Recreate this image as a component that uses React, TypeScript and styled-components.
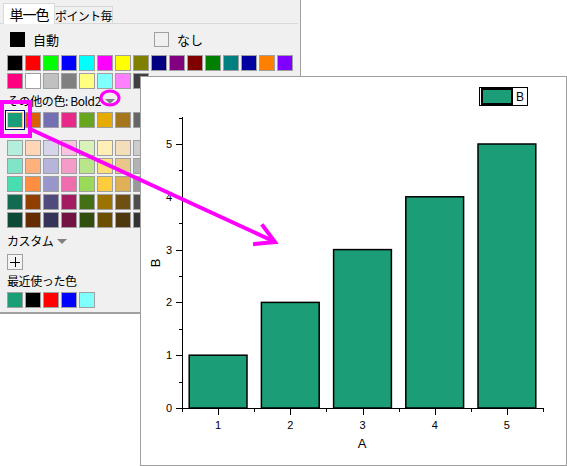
import React from 'react';
import styled, { createGlobalStyle, css } from 'styled-components';

const GlobalStyle = createGlobalStyle`
  html, body {
    margin: 0;
    padding: 0;
    background: #ffffff;
  }
  body {
    font-family: 'MS UI Gothic', 'Noto Sans CJK JP', sans-serif;
  }
`;

const basicColors = [
  '#000000', '#FF0000', '#00FF00', '#0000FF', '#00FFFF', '#FF00FF', '#FFFF00', '#808000',
  '#000080', '#800080', '#800000', '#008000', '#008080', '#0000A0', '#FF8000', '#8000FF',
  '#FF0080', '#FFFFFF', '#C0C0C0', '#808080', '#FFFF80', '#80FFFF', '#FF80FF', '#404040',
];

const boldColors = ['#1B9E77', '#D95F02', '#7570B3', '#E7298A', '#66A61E', '#E6AB02', '#A6761D', '#666666'];

const shadeRows = [
  ['#B4EFDE', '#FFD6B6', '#D6D4EB', '#F9C2DE', '#D9F2B9', '#FFEEB6', '#F3DEB9', '#CCCCCC'],
  ['#80E5C8', '#FFB17B', '#B6B4DA', '#F59BC7', '#B9E68B', '#FFDD7B', '#E9C689', '#B3B3B3'],
  ['#48DDB1', '#FF8E40', '#9896CA', '#EF6CAE', '#99DA56', '#FFCC40', '#DFB056', '#999999'],
  ['#126B50', '#913F01', '#4F4B7C', '#A31B61', '#456F14', '#9B7302', '#704F13', '#4D4D4D'],
  ['#0C4A37', '#652C01', '#36335A', '#721344', '#304E0E', '#6C5001', '#4E370D', '#333333'],
];

const recentColors = ['#1B9E77', '#000000', '#FF0000', '#0000FF', '#80FFFF'];

const Stage = styled.div`
  position: relative;
  width: 567px;
  height: 466px;
  overflow: hidden;
  background: #ffffff;
`;

/* ---------- colour panel ---------- */

const Panel = styled.div`
  position: absolute;
  left: 0;
  top: 0;
  width: 301px;
  height: 314px;
  box-sizing: border-box;
  background: #f0f0f0;
  border-right: 1px solid #a0a0a0;
  border-bottom: 2px solid #a0a0a0;
  display: flex;
  flex-direction: column;
  font-size: 12px;
  color: #000;
`;

const TabBar = styled.div`
  display: flex;
  align-items: flex-end;
  height: 24px;
  box-sizing: border-box;
  padding-left: 3px;
  margin-right: 2px;
  border-bottom: 1px solid #d9d9d9;
`;

const Tab = styled.div<{ $active?: boolean }>`
  box-sizing: border-box;
  display: flex;
  align-items: center;
  justify-content: center;
  border: 1px solid #d9d9d9;
  border-bottom: none;
  ${({ $active }) =>
    $active
      ? css`
          height: 21px;
          width: 52px;
          margin-bottom: -1px;
          background: #ffffff;
          font-size: 14px;
          letter-spacing: -1px;
        `
      : css`
          height: 17px;
          width: 59px;
          margin-left: -1px;
          background: #f0f0f0;
          font-size: 12px;
          letter-spacing: -0.6px;
        `}
`;

const Body = styled.div`
  display: flex;
  flex-direction: column;
  padding: 8px 0 0 7px;
`;

const AutoRow = styled.div`
  display: grid;
  grid-template-columns: 144px auto;
  padding-left: 3px;
  height: 15px;
`;

const ChoiceItem = styled.div`
  display: flex;
  align-items: center;
  gap: 8px;
  line-height: 15px;
  font-size: 13px;
`;

const ChoiceBox = styled.div<{ $color?: string }>`
  width: 15px;
  height: 15px;
  box-sizing: border-box;
  background: ${({ $color }) => $color ?? '#f0f0f0'};
  border: ${({ $color }) => ($color ? 'none' : '1px solid #a0a0a0')};
`;

const SwatchGrid = styled.div<{ $top?: number }>`
  display: grid;
  grid-template-columns: repeat(16, 16px);
  grid-auto-rows: 16px;
  gap: 2px;
  margin-top: ${({ $top }) => $top ?? 0}px;
`;

const Swatch = styled.div<{ $color: string; $selected?: boolean }>`
  box-sizing: border-box;
  width: 16px;
  height: 16px;
  background: ${({ $color }) => $color};
  border: 1px solid #a0a0a0;
  ${({ $selected }) =>
    $selected &&
    css`
      border-color: #f4c896;
      box-shadow: 0 0 0 1px #ffffff, 0 0 0 2px #000080;
    `}
`;

const SectionLabel = styled.div<{ $height: number }>`
  display: flex;
  align-items: center;
  height: ${({ $height }) => $height}px;
  letter-spacing: -0.4px;
  white-space: nowrap;
`;

const DropArrow = styled.span`
  display: inline-block;
  width: 0;
  height: 0;
  margin-left: 4px;
  margin-top: 2px;
  border-left: 5px solid transparent;
  border-right: 5px solid transparent;
  border-top: 5px solid #808080;
`;

const AddButton = styled.div`
  box-sizing: border-box;
  width: 16px;
  height: 16px;
  margin-top: 2px;
  border: 1px solid #a0a0a0;
  background: #f4f4f4;
  display: flex;
  align-items: center;
  justify-content: center;
`;

const RecentRow = styled.div`
  display: flex;
  gap: 2px;
  margin-top: 1px;
`;

/* ---------- chart window ---------- */

const ChartWindow = styled.div`
  position: absolute;
  left: 140px;
  top: 76px;
  width: 427px;
  height: 390px;
  box-sizing: border-box;
  border: 1px solid #a0a0a0;
  background: #ffffff;
`;

const ChartSvg = styled.svg`
  display: block;
  font-family: 'Liberation Sans', Arial, sans-serif;
`;

const Overlay = styled.svg`
  position: absolute;
  left: 0;
  top: 0;
  pointer-events: none;
`;

const BAR = '#1B9E77';
const xp = (v: number) => 182 + (v - 0.5) * 72.2;
const yp = (v: number) => 408 - v * 52.8;
const values = [1, 2, 3, 4, 5];
const halfSteps = Array.from({ length: 12 }, (_, i) => i * 0.5);
const xSteps = Array.from({ length: 11 }, (_, i) => 0.5 + i * 0.5);

const Chart: React.FC = () => (
  <ChartSvg width={425} height={388}>
    <g transform="translate(-141 -77)">
      {values.map((v) => (
        <rect
          key={v}
          x={xp(v) - 28.9}
          y={yp(v)}
          width={57.8}
          height={408 - yp(v)}
          fill={BAR}
          stroke="#000"
          strokeWidth={1.5}
        />
      ))}

      <g stroke="#000" strokeWidth={1} shapeRendering="crispEdges">
        <line x1={182.5} y1={117} x2={182.5} y2={409} />
        <line x1={182} y1={408.5} x2={544} y2={408.5} />
        {halfSteps.map((v) => {
          const len = Number.isInteger(v) ? 6 : 3;
          const y = Math.round(yp(v)) + 0.5;
          return <line key={`y${v}`} x1={182 - len} y1={y} x2={182} y2={y} />;
        })}
        {xSteps.map((v) => {
          const len = Number.isInteger(v) ? 6 : 3;
          const x = Math.round(xp(v)) + 0.5;
          return <line key={`x${v}`} x1={x} y1={409} x2={x} y2={409 + len} />;
        })}
      </g>

      <g fontSize={11} fill="#000">
        {halfSteps.filter((v) => Number.isInteger(v) && v <= 5).map((v) => (
          <text key={`yl${v}`} x={172} y={yp(v) + 4} textAnchor="end">
            {v}
          </text>
        ))}
        {values.map((v) => (
          <text key={`xl${v}`} x={xp(v)} y={429} textAnchor="middle">
            {v}
          </text>
        ))}
      </g>

      <text x={362} y={448} fontSize={13} textAnchor="middle">A</text>
      <text x={160} y={263} fontSize={13} textAnchor="middle" transform="rotate(-90 160 263)">B</text>

      <g shapeRendering="crispEdges">
        <rect x={479.5} y={87.5} width={48} height={18} fill="#fff" stroke="#000" />
        <rect x={482} y={89} width={30} height={15} fill={BAR} stroke="#000" strokeWidth={1.5} />
      </g>
      <text x={520} y={101} fontSize={12} textAnchor="middle">B</text>
    </g>
  </ChartSvg>
);

const Annotation: React.FC = () => (
  <Overlay width={567} height={466}>
    <g stroke="#FF00FF" fill="none" strokeWidth={4}>
      <rect x={2} y={102} width={28} height={34} />
      <ellipse cx={110} cy={98} rx={9} ry={7} strokeWidth={3} />
      <line x1={30} y1={129} x2={273} y2={241} />
      <polyline points="263,226 275,242 255,244" strokeLinecap="square" />
    </g>
  </Overlay>
);

const App: React.FC = () => (
  <>
    <GlobalStyle />
    <Stage>
      <Panel>
        <TabBar>
          <Tab $active>単一色</Tab>
          <Tab>ポイント毎</Tab>
        </TabBar>
        <Body>
          <AutoRow>
            <ChoiceItem>
              <ChoiceBox $color="#000000" />
              自動
            </ChoiceItem>
            <ChoiceItem>
              <ChoiceBox />
              なし
            </ChoiceItem>
          </AutoRow>

          <SwatchGrid $top={8}>
            {basicColors.map((c, i) => (
              <Swatch key={i} $color={c} />
            ))}
          </SwatchGrid>

          <SectionLabel $height={23}>
            その他の色: Bold2
            <DropArrow />
          </SectionLabel>

          <SwatchGrid>
            {boldColors.map((c, i) => (
              <Swatch key={i} $color={c} $selected={i === 0} />
            ))}
          </SwatchGrid>

          <SwatchGrid $top={12}>
            {shadeRows.map((row, r) =>
              row.map((c, i) => <Swatch key={`${r}-${i}`} $color={c} style={{ gridRow: r + 1, gridColumn: i + 1 }} />)
            )}
          </SwatchGrid>

          <SectionLabel $height={24}>
            カスタム
            <DropArrow />
          </SectionLabel>

          <AddButton>
            <svg width={12} height={12} viewBox="0 0 12 12">
              <path d="M6 1v10M1 6h10" stroke="#000" strokeWidth={1} shapeRendering="crispEdges" />
            </svg>
          </AddButton>

          <SectionLabel $height={21}>最近使った色</SectionLabel>

          <RecentRow>
            {recentColors.map((c, i) => (
              <Swatch key={i} $color={c} />
            ))}
          </RecentRow>
        </Body>
      </Panel>

      <ChartWindow>
        <Chart />
      </ChartWindow>

      <Annotation />
    </Stage>
  </>
);

export default App;
